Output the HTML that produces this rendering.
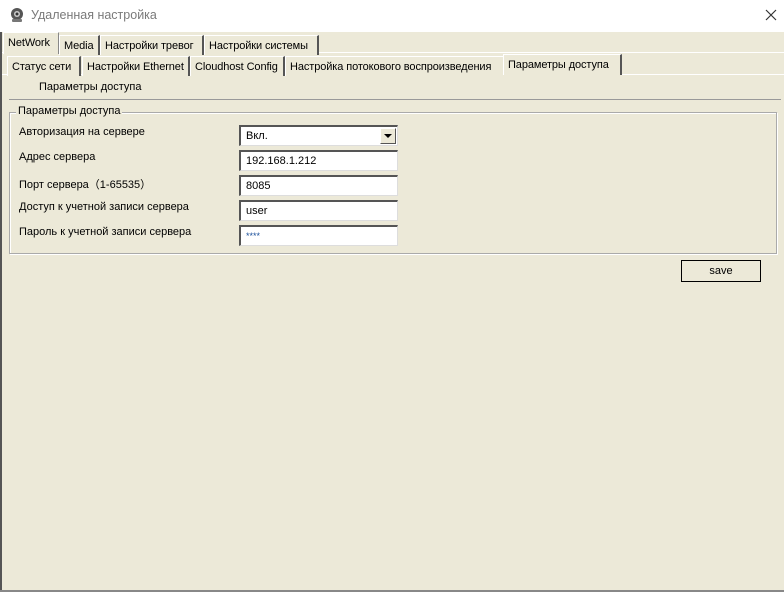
<!DOCTYPE html>
<html><head><meta charset="utf-8"><style>
*{margin:0;padding:0;box-sizing:border-box}
body{width:784px;height:592px;background:#ece9d8;font-family:"Liberation Sans",Arial,sans-serif;font-size:11px;color:#000;position:relative;overflow:hidden}
.a{position:absolute}
.title{left:0;top:0;width:784px;height:32px;background:#fff}
.title span{position:absolute;left:31px;top:8px;font-size:12.5px;color:#7a7a7a}
.tab{position:absolute;height:20px;border-left:1px solid #fff;border-top:1px solid #fff;border-right:2px solid #555;padding:4px 0 0 4px;white-space:nowrap;background:#ece9d8;font-size:11px;letter-spacing:-0.1px}
.sel{z-index:2}
.lbl{position:absolute;left:19px;font-size:11px}
.inp{position:absolute;left:239px;width:159px;height:21px;background:#fff;border-top:2px solid #555;border-left:2px solid #555;border-right:1px solid #ddd;border-bottom:1px solid #ddd;font-size:11px;padding:3px 0 0 5px}
</style></head><body>
<div class="a title"><svg class="a" style="left:9px;top:7px" width="16" height="16" viewBox="0 0 16 16"><circle cx="8" cy="7" r="6" fill="#555"/><circle cx="8" cy="7" r="3" fill="#ccc"/><circle cx="8" cy="7" r="1.5" fill="#333"/><rect x="3" y="12" width="10" height="3" rx="1" fill="#777"/></svg><span>Удаленная настройка</span>
<svg class="a" style="left:765px;top:9px" width="12" height="12"><path d="M1 1L11 11M11 1L1 11" stroke="#333" stroke-width="1.2"/></svg></div>
<div class="a" style="left:0;top:32px;width:2px;height:560px;background:#555"></div>
<div class="a" style="left:0;top:590px;width:784px;height:2px;background:#888"></div>
<div class="a" style="left:2px;top:52px;width:782px;height:1px;background:#fff"></div>
<div class="tab sel" style="left:3px;top:32px;width:56px;height:22px;border-right:1px solid #888;padding-top:4px">NetWork</div>
<div class="tab" style="left:59px;top:35px;width:41px">Media</div>
<div class="tab" style="left:100px;top:35px;width:104px">Настройки тревог</div>
<div class="tab" style="left:204px;top:35px;width:115px">Настройки системы</div>
<div class="a" style="left:2px;top:74px;width:782px;height:1px;background:#fff"></div>
<div class="tab" style="left:7px;top:56px;width:74px">Статус сети</div>
<div class="tab" style="left:82px;top:56px;width:108px">Настройки Ethernet</div>
<div class="tab" style="left:190px;top:56px;width:95px">Cloudhost Config</div>
<div class="tab" style="left:285px;top:56px;width:218px;border-right:none">Настройка потокового воспроизведения</div>
<div class="tab sel" style="left:503px;top:54px;width:119px;height:21px;padding-top:4px">Параметры доступа</div>
<div class="a" style="left:39px;top:81px">Параметры доступа</div>
<div class="a" style="left:9px;top:99px;width:772px;height:1px;background:#999"></div>
<div class="a" style="left:9px;top:112px;width:768px;height:142px;border:1px solid #aaa;box-shadow:inset 1px 1px 0 #fff,1px 1px 0 #fff"></div>
<div class="a" style="left:16px;top:105px;background:#ece9d8;padding:0 2px;font-size:11px">Параметры доступа</div>
<div class="lbl" style="top:126px">Авторизация на сервере</div>
<div class="lbl" style="top:151px">Адрес сервера</div>
<div class="lbl" style="top:176px">Порт сервера（1-65535）</div>
<div class="lbl" style="top:201px">Доступ к учетной записи сервера</div>
<div class="lbl" style="top:226px">Пароль к учетной записи сервера</div>
<div class="inp" style="top:125px">Вкл.<div class="a" style="right:1px;top:1px;width:16px;height:16px;background:#ece9d8;border:1px solid #fff;border-right-color:#555;border-bottom-color:#555"><svg width="14" height="14"><path d="M3 5h8l-4 4z" fill="#000"/></svg></div></div>
<div class="inp" style="top:150px">192.168.1.212</div>
<div class="inp" style="top:175px">8085</div>
<div class="inp" style="top:200px">user</div>
<div class="inp" style="top:225px;color:#1a4f9a;font-size:9px;padding-top:4px">****</div>
<div class="a" style="left:681px;top:260px;width:80px;height:22px;border:1px solid #000;text-align:center;line-height:20px;font-size:11px">save</div>
</body></html>
